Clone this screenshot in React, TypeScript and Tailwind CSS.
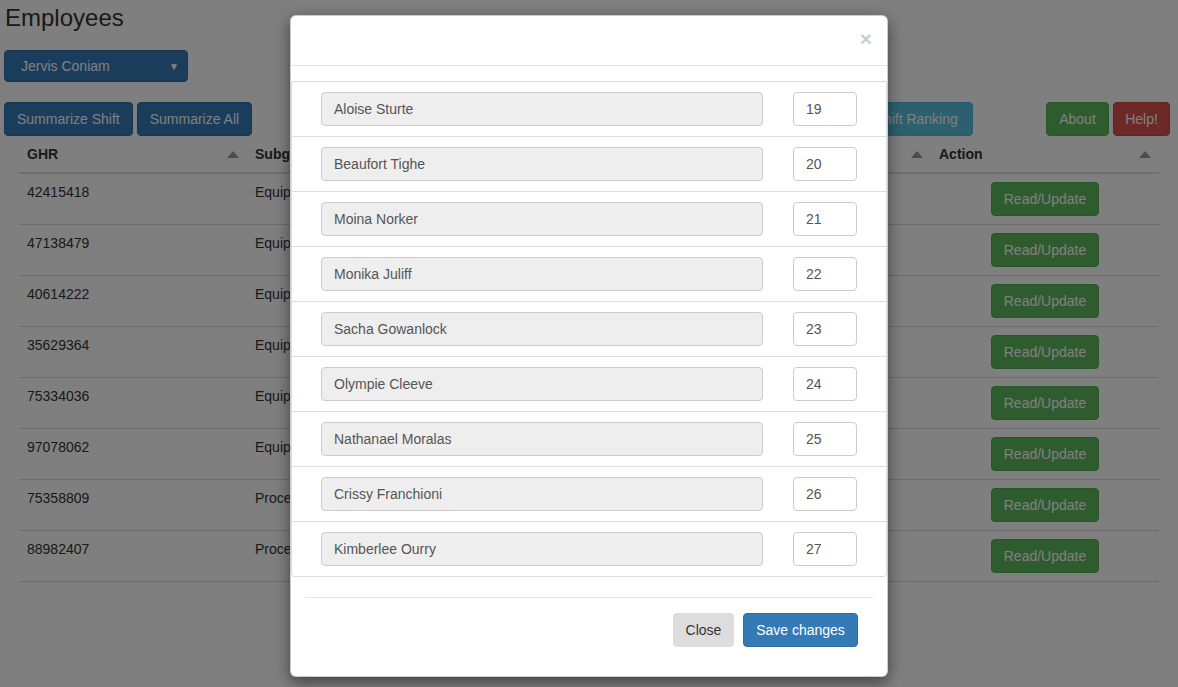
const rows = [
  { ghr: "42415418", sub: "Equipment" },
  { ghr: "47138479", sub: "Equipment" },
  { ghr: "40614222", sub: "Equipment" },
  { ghr: "35629364", sub: "Equipment" },
  { ghr: "75334036", sub: "Equipment" },
  { ghr: "97078062", sub: "Equipment" },
  { ghr: "75358809", sub: "Process" },
  { ghr: "88982407", sub: "Process" },
];

const ranking = [
  { name: "Aloise Sturte", rank: 19 },
  { name: "Beaufort Tighe", rank: 20 },
  { name: "Moina Norker", rank: 21 },
  { name: "Monika Juliff", rank: 22 },
  { name: "Sacha Gowanlock", rank: 23 },
  { name: "Olympie Cleeve", rank: 24 },
  { name: "Nathanael Moralas", rank: 25 },
  { name: "Crissy Franchioni", rank: 26 },
  { name: "Kimberlee Ourry", rank: 27 },
];

const columns = ["GHR", "Subgroup", "Employee", "Shift", "Action"];

function SortArrow() {
  return (
    <svg width="12" height="7" viewBox="0 0 12 7" className="shrink-0">
      <path d="M6 0 L12 7 L0 7 Z" fill="#999" />
    </svg>
  );
}

export default function App() {
  return (
    <div className="relative w-[1178px] h-[687px] overflow-hidden bg-white text-[14px] text-[#333] font-['Liberation_Sans',Arial,sans-serif]">
      {/* page behind the modal */}
      <div className="pt-[4px]">
        <h1 className="pl-[5px] text-[24px] leading-[28px] text-[#333]">Employees</h1>

        <div className="pl-[4px] mt-[18px]">
          <button className="flex items-center w-[184px] h-[32px] rounded-[4px] bg-[#337ab7] border border-[#2e6da4] text-white pl-[16px] pr-[8px]">
            <span className="flex-1 text-left">Jervis Coniam</span>
            <span className="text-[10px]">▼</span>
          </button>
        </div>

        <div className="flex items-center mt-[20px] px-[4px]">
          <div className="flex gap-[4px]">
            <button className="h-[34px] px-[12px] rounded-[4px] bg-[#337ab7] border border-[#2e6da4] text-white">Summarize Shift</button>
            <button className="h-[34px] px-[12px] rounded-[4px] bg-[#337ab7] border border-[#2e6da4] text-white">Summarize All</button>
            <button className="h-[34px] w-[114px] rounded-[4px] bg-[#5bc0de] border border-[#46b8da] text-white ml-[603px]">Shift Ranking</button>
          </div>
          <div className="flex gap-[4px] ml-auto pr-[4px]">
            <button className="h-[34px] w-[63px] rounded-[4px] bg-[#5cb85c] border border-[#4cae4c] text-white">About</button>
            <button className="h-[34px] w-[57px] rounded-[4px] bg-[#d9534f] border border-[#d43f3a] text-white">Help!</button>
          </div>
        </div>

        <div className="mx-[19px] w-[1140px] mt-[1px]">
          <div className="grid grid-cols-5 h-[37px] border-b-2 border-[#ddd]">
            {columns.map((c) => (
              <div key={c} className="flex items-center justify-between px-[8px] font-bold">
                <span>{c}</span>
                <SortArrow />
              </div>
            ))}
          </div>
          {rows.map((r) => (
            <div key={r.ghr} className="grid grid-cols-5 h-[51px] border-b border-[#ddd]">
              <div className="px-[8px] pt-[8px] leading-[20px]">{r.ghr}</div>
              <div className="px-[8px] pt-[8px] leading-[20px]">{r.sub}</div>
              <div className="px-[8px] pt-[8px] leading-[20px]"></div>
              <div className="px-[8px] pt-[8px] leading-[20px]"></div>
              <div className="flex justify-center pt-[8px]">
                <button className="h-[34px] w-[108px] rounded-[4px] bg-[#5cb85c] border border-[#4cae4c] text-white">Read/Update</button>
              </div>
            </div>
          ))}
        </div>
      </div>

      {/* backdrop */}
      <div className="absolute inset-0 bg-black/50" />

      {/* modal */}
      <div className="absolute inset-0 flex justify-center pt-[15px]">
        <div className="w-[598px] h-[662px] bg-white rounded-[6px] border border-black/20 shadow-[0_5px_15px_rgba(0,0,0,0.5)] flex flex-col">
          <div className="h-[50px] border-b border-[#e5e5e5] flex items-start justify-end pr-[15px] pt-[10px]">
            <span className="text-[21px] font-bold leading-[26px] text-black opacity-20">×</span>
          </div>

          <div className="pt-[15px]">
            <div className="border-x border-b border-[#ddd] rounded-[4px]">
              {ranking.map((p) => (
                <div key={p.name} className="flex items-center h-[55px] pl-[29px] gap-[30px] border-t border-[#ddd]">
                  <div className="w-[442px] h-[34px] flex items-center px-[12px] bg-[#eee] border border-[#ccc] rounded-[4px] text-[#555]">{p.name}</div>
                  <div className="w-[64px] h-[34px] flex items-center px-[12px] bg-white border border-[#ccc] rounded-[4px] text-[#555]">{p.rank}</div>
                </div>
              ))}
            </div>
          </div>

          <div className="mx-[14px] mt-[20px] border-t border-[#e5e5e5] pl-[15px] pr-[15px] pt-[15px] flex justify-end gap-[9px]">
            <button className="h-[34px] w-[61px] rounded-[4px] bg-[#ddd] text-[#333]">Close</button>
            <button className="h-[34px] w-[115px] rounded-[4px] bg-[#337ab7] border border-[#2e6da4] text-white">Save changes</button>
          </div>
        </div>
      </div>
    </div>
  );
}
